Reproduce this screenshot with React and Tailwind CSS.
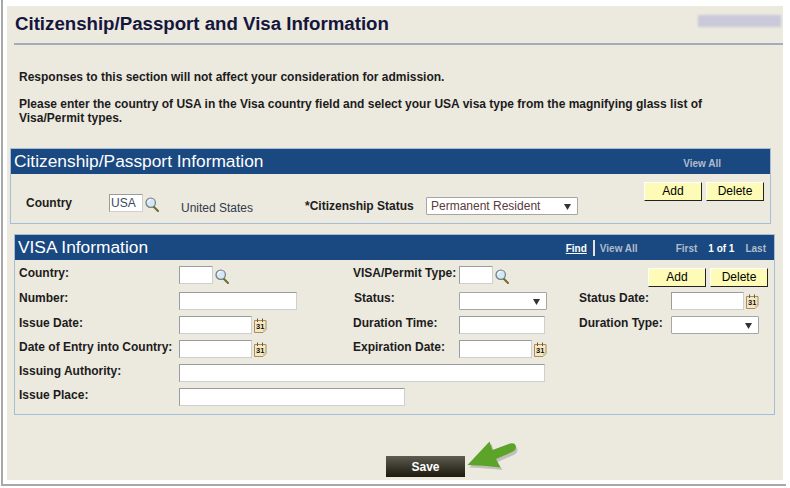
import React from 'react';

const labelClass = "text-[12px] leading-[14px] font-bold text-[#1c1c1c]";

function Lookup({ className = "" }) {
  return (
    <svg width="14" height="15" viewBox="0 0 14 15" className={className}>
      <line x1="8.500" y1="9.500" x2="13" y2="14" stroke="#6f6a2c" strokeWidth="2" strokeLinecap="round" />
      <circle cx="5.700" cy="5.700" r="4.700" fill="#d3e8f5" stroke="#6f7b84" strokeWidth="1.200" />
      <path d="M3 5.500a3 3 0 0 1 3-3" fill="none" stroke="#ffffff" strokeWidth="1" />
    </svg>
  );
}

function CalendarIcon({ className = "" }) {
  return (
    <svg width="13" height="15" viewBox="0 0 13 15" className={className}>
      <path d="M0.500 2.500h11.500v9l-3 3h-8.500z" fill="#f6e7c4" stroke="#a88d5c" strokeWidth="1" />
      <path d="M9 14.500l0-3h3z" fill="#d9c08e" />
      <line x1="3.500" y1="0.500" x2="3.500" y2="4" stroke="#6b5a3a" strokeWidth="1" />
      <line x1="8.500" y1="0.500" x2="8.500" y2="4" stroke="#6b5a3a" strokeWidth="1" />
      <text x="6.200" y="11" fontSize="7.500" fontWeight="700" fontFamily="Liberation Sans" textAnchor="middle" fill="#111111">31</text>
    </svg>
  );
}

function Field({ width, value = "" }) {
  return (
    <input
      readOnly
      value={value}
      style={{ width }}
      className="block h-[18px] shrink-0 bg-white border border-t-[#9c9c9c] border-l-[#9c9c9c] border-r-[#cfcfcf] border-b-[#cfcfcf] px-[1px] text-[12px] text-[#3a4a66] outline-none font-['Liberation_Sans',sans-serif]"
    />
  );
}

function Dropdown({ width, value = "" }) {
  return (
    <div style={{ width }} className="h-[18px] shrink-0 flex items-center justify-between bg-white border border-[#a6a6a6] rounded-[1px] pl-[4px] pr-[6px] text-[12px] text-[#5a3a3a]">
      <span>{value}</span>
      <svg width="7" height="7" viewBox="0 0 7 7"><path d="M0 1h7L3.500 7z" fill="#333333" /></svg>
    </div>
  );
}

function SmallButton({ children }) {
  return (
    <button className="w-[58px] h-[19px] bg-[#fdfbb5] border border-t-white border-l-white border-r-[#222222] border-b-[#222222] text-[12px] leading-[15px] text-black">
      {children}
    </button>
  );
}

function DateField() {
  return (
    <div className="flex items-start">
      <Field width={73} />
      <CalendarIcon className="ml-[2px] mt-[2px]" />
    </div>
  );
}

function LookupField({ value }) {
  return (
    <div className="flex items-start">
      <Field width={34} value={value} />
      <Lookup className="ml-[2px] mt-[3px]" />
    </div>
  );
}

function Label({ children, className = "" }) {
  return <div className={`${labelClass} ${className}`}>{children}</div>;
}

export default function App() {
  return (
    <div className="w-[790px] h-[488px] bg-white overflow-hidden font-['Liberation_Sans',Arial,sans-serif]">
      <div className="ml-[1px] w-[785px] h-[486px] border-l-2 border-b-2 border-[#a8a8a8] pt-[6px] pl-[4px]">
        <div className="relative w-[776px] h-[474px] bg-[#ece9df]">
          {/* page title */}
          <div className="h-[37px] flex items-start justify-between pl-[8px] pr-[2px]">
            <h1 className="mt-[7px] text-[18.67px] leading-[22px] font-bold text-[#15163c]">Citizenship/Passport and Visa Information</h1>
            <div className="mt-[9px] w-[83px] h-[12px] bg-[#c9c9da] blur-[1px]" />
          </div>
          <div className="ml-[7px] h-[2px] bg-[#a3adb9]" />

          <div className={`${labelClass} ml-[12px] mt-[25px]`}>
            <p>Responses to this section will not affect your consideration for admission.</p>
            <p className="mt-[13px]">Please enter the country of USA in the Visa country field and select your USA visa type from the magnifying glass list of<br />Visa/Permit types.</p>
          </div>

          {/* citizenship */}
          <section className="ml-[3px] mt-[23px] w-[761px] h-[76px] border border-[#a5bdd6]">
            <div className="h-[25px] bg-[#1a4880] flex items-center justify-between text-white">
              <h2 className="pl-[3px] -mt-[2px] text-[17.33px] leading-[22px]">Citizenship/Passport Information</h2>
              <a className="mr-[49px] mt-[4px] text-[10px] font-bold text-[#b1bccd]">View All</a>
            </div>
            <div className="flex items-start">
              <Label className="ml-[15px] mt-[22px] w-[83px]">Country</Label>
              <div className="mt-[20px]"><LookupField value="USA" /></div>
              <div className="ml-[22px] mt-[27px] w-[124px] text-[12px] leading-[14px] text-[#333a4d]">United States</div>
              <Label className="mt-[25px] w-[121px]">*Citizenship Status</Label>
              <div className="mt-[23px]"><Dropdown width={152} value="Permanent Resident" /></div>
              <div className="ml-[66px] mt-[8px] flex gap-[4px]">
                <SmallButton>Add</SmallButton>
                <SmallButton>Delete</SmallButton>
              </div>
            </div>
          </section>

          {/* visa */}
          <section className="ml-[7px] mt-[10px] w-[761px] h-[181px] border border-[#a5bdd6]">
            <div className="h-[25px] bg-[#1a4880] flex items-center text-white">
              <h2 className="pl-[3px] -mt-[2px] text-[17.33px] leading-[22px]">VISA Information</h2>
              <div className="ml-auto mr-[8px] mt-[1px] flex items-center text-[10px] font-bold text-[#b1bccd]">
                <a className="text-white underline">Find</a>
                <span className="ml-[6px] h-[16px] w-[2px] bg-[#e6e2da]" />
                <a className="ml-[5px]">View All</a>
                <a className="ml-[38px]">First</a>
                <span className="ml-[11px] text-white">1 of 1</span>
                <a className="ml-[11px]">Last</a>
              </div>
            </div>
            <div className="pl-[4px] pt-[6px] grid grid-cols-[160px_174px_106px_120px_92px_100px] grid-rows-[26px_24px_24px_24px_24px_24px]">
              <Label>Country:</Label>
              <LookupField />
              <Label>VISA/Permit Type:</Label>
              <LookupField />
              <div className="col-span-2 flex justify-end gap-[4px] pr-[3px] pt-[2px]">
                <SmallButton>Add</SmallButton>
                <SmallButton>Delete</SmallButton>
              </div>

              <Label className="-mt-[1px]">Number:</Label>
              <Field width={118} />
              <Label className="-mt-[1px] pl-[1px]">Status:</Label>
              <Dropdown width={88} />
              <Label className="-mt-[1px]">Status Date:</Label>
              <DateField />

              <Label>Issue Date:</Label>
              <DateField />
              <Label>Duration Time:</Label>
              <Field width={86} />
              <Label>Duration Type:</Label>
              <Dropdown width={88} />

              <Label>Date of Entry into Country:</Label>
              <DateField />
              <Label>Expiration Date:</Label>
              <div className="col-span-3"><DateField /></div>

              <Label>Issuing Authority:</Label>
              <div className="col-span-5"><Field width={366} /></div>

              <Label>Issue Place:</Label>
              <div className="col-span-5"><Field width={226} /></div>
            </div>
          </section>

          <div className="mt-[41px] flex pl-[379px]">
            <button className="w-[79px] h-[21px] bg-gradient-to-b from-[#5f5c52] to-[#1c1a0e] text-[12px] font-bold text-white">Save</button>
          </div>

          {/* callout arrow */}
          <svg width="60" height="42" viewBox="0 0 60 42" className="absolute left-[458px] top-[434px]">
            <path d="M3 25.500L25 2L28 10.500L45 4.500Q50 3 51 7.500Q51 11 47 13L31 20L36 28Q18 26 3 25.500Z" fill="#000000" opacity="0.18" transform="translate(1.500 2)" />
            <path d="M2.500 25L24.500 1.500L27.500 10L45 3.500Q50 2 51 6.500Q51 10 47 12L31 19L35.500 27.500Q18 25 2.500 25Z" fill="#5ca32a" />
          </svg>
        </div>
      </div>
    </div>
  );
}
